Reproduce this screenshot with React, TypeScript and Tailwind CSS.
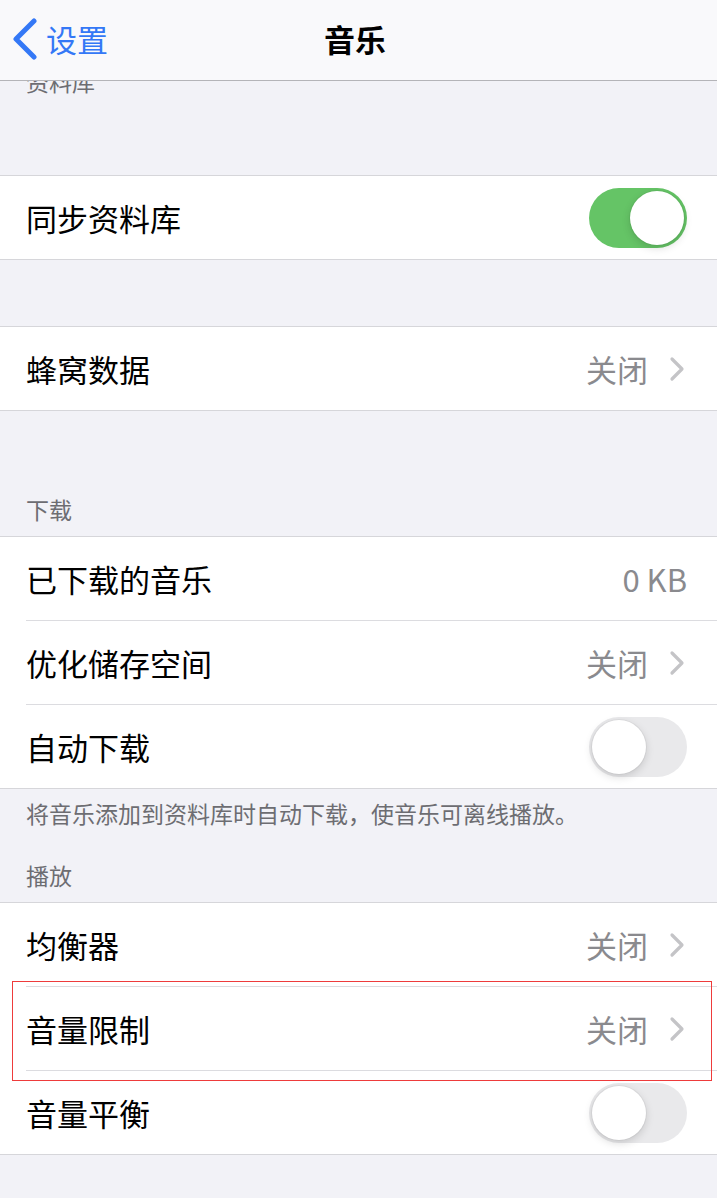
import type { ReactNode } from 'react';

type Row = {
  label: string;
  value?: string;
  chevron?: boolean;
  toggle?: 'on' | 'off';
};

const fontStack = '"Noto Sans CJK SC", "Noto Sans", sans-serif';

function Toggle({ on }: { on: boolean }) {
  return (
    <div
      className={`flex h-[60px] w-[98px] items-center rounded-full p-[3px] ${
        on ? 'justify-end bg-[#65c466]' : 'justify-start bg-[#e9e9eb]'
      }`}
    >
      <div className="h-[54px] w-[54px] rounded-full bg-white shadow-[0_3px_8px_rgba(0,0,0,0.15),0_0_0_1px_rgba(0,0,0,0.04)]" />
    </div>
  );
}

function Chevron() {
  return (
    <svg width="16" height="26" viewBox="0 0 16 26" aria-hidden="true">
      <path
        d="M3 3 L13 13 L3 23"
        fill="none"
        stroke="#c4c4c7"
        strokeWidth="3.2"
        strokeLinecap="round"
        strokeLinejoin="round"
      />
    </svg>
  );
}

function Group({ rows }: { rows: Row[] }) {
  return (
    <div className="border-y border-[#d6d6da] bg-white">
      {rows.map((row, index) => {
        const last = index === rows.length - 1;
        return (
          <div className="flex pl-[26px]" key={row.label}>
            <div
              className={`flex flex-1 items-center ${row.chevron ? 'pr-[34px]' : 'pr-[30px]'} ${
                last ? 'h-[83px]' : 'h-[84px] border-b border-[#dcdce0]'
              }`}
            >
              <span className="flex-1 text-[31px] leading-none text-black">{row.label}</span>
              {row.value ? (
                <span className="text-[31px] leading-none text-[#8a8a8e]">{row.value}</span>
              ) : null}
              {row.chevron ? (
                <span className="ml-[21px] mr-[-2px] flex items-center">
                  <Chevron />
                </span>
              ) : null}
              {row.toggle ? <Toggle on={row.toggle === 'on'} /> : null}
            </div>
          </div>
        );
      })}
    </div>
  );
}

function Caption({ children, className }: { children: ReactNode; className: string }) {
  return (
    <p className={`pl-[26px] text-[23px] leading-none text-[#6d6d72] ${className}`}>{children}</p>
  );
}

export default function App() {
  return (
    <div
      className="relative h-[1198px] w-[717px] overflow-hidden bg-[#f2f2f7]"
      style={{ fontFamily: fontStack }}
    >
      <header className="relative z-10 flex h-[81px] items-center border-b border-[#b4b4b8] bg-[#f9f9fb] pb-[3px]">
        <a className="flex items-center pl-[11px] text-[31px] leading-none text-[#3478f6]" href="#back">
          <svg width="30" height="42" viewBox="0 0 30 42" aria-hidden="true">
            <path
              d="M23 3 L5 21 L23 39"
              fill="none"
              stroke="#3478f6"
              strokeWidth="5"
              strokeLinecap="round"
              strokeLinejoin="round"
            />
          </svg>
          <span className="ml-[5px]">设置</span>
        </a>
        <h1 className="absolute left-[324px] text-[31px] font-semibold leading-none text-black">
          音乐
        </h1>
      </header>

      <div className="h-[94px] overflow-hidden">
        <Caption className="-mt-[11px]">资料库</Caption>
      </div>

      <Group rows={[{ label: '同步资料库', toggle: 'on' }]} />

      <div className="h-[66px]" />

      <Group rows={[{ label: '蜂窝数据', value: '关闭', chevron: true }]} />

      <div className="flex h-[125px] items-end pb-[15px]">
        <Caption className="">下载</Caption>
      </div>

      <Group
        rows={[
          { label: '已下载的音乐', value: '0 KB' },
          { label: '优化储存空间', value: '关闭', chevron: true },
          { label: '自动下载', toggle: 'off' },
        ]}
      />

      <Caption className="pt-[13px]">将音乐添加到资料库时自动下载，使音乐可离线播放。</Caption>
      <Caption className="pt-[39px] pb-[15px]">播放</Caption>

      <Group
        rows={[
          { label: '均衡器', value: '关闭', chevron: true },
          { label: '音量限制', value: '关闭', chevron: true },
          { label: '音量平衡', toggle: 'off' },
        ]}
      />

      <div className="pointer-events-none absolute left-[12px] top-[981px] h-[100px] w-[700px] border border-[#ee3b3b]" />
    </div>
  );
}
